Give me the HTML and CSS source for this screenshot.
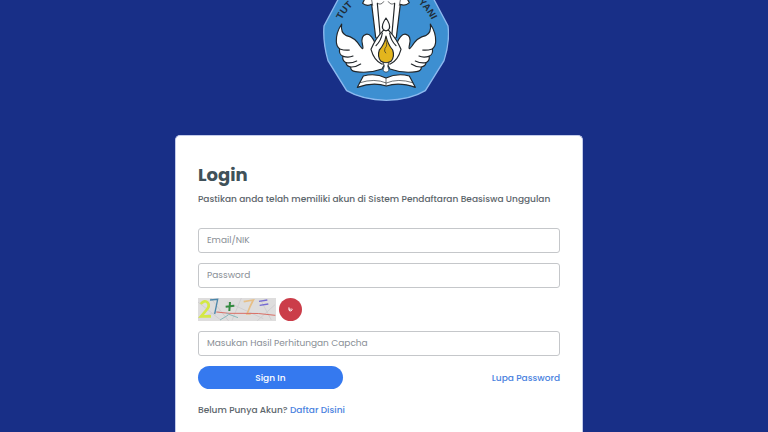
FILE: index.html
```html
<!DOCTYPE html>
<html lang="id">
<head>
  <meta charset="UTF-8">
  <meta name="viewport" content="width=device-width, initial-scale=1.0">
  <title>Login</title>
  <link rel="stylesheet" href="styles.css">
</head>
<body>
  <div class="login-page">
    <header class="brand">
      <svg class="logo" viewBox="-21 0 420 303" role="img" aria-label="Tut Wuri Handayani">
        <defs>
          <path id="motto" d="M77 60 A150 150 0 0 1 347 60"/>
        </defs>
        <path d="M76 -20 L24 78 Q20 125 36 182 L92 272 Q140 300 211 301 Q282 300 328 272 L384 182 Q402 125 396 78 L344 -20 Z" fill="#3d8fd1" stroke="#8db9ef" stroke-width="4"/>
        <g class="motto">
          <text><textPath href="#motto">TUT</textPath></text>
          <text text-anchor="end"><textPath href="#motto" startOffset="100%">YANI</textPath></text>
        </g>
        <g fill="#fff" stroke="#22272b" stroke-width="3.5" stroke-linejoin="round" stroke-linecap="round">
          <path d="M77 72 Q60 98 61 124 Q61 139 71 147 Q67 162 81 169 Q77 180 90 188 Q91 199 104 201 Q103 213 119 215 Q160 221 198 207 L211 184 L179 133 Q165 99 150 103 Q134 107 139 132 Q145 156 132 138 Q116 112 91 107 Q73 99 77 72 Z"/>
          <path d="M71 147 Q88 152 100 150 M81 169 Q98 174 111 168 M90 188 Q106 191 122 183 M104 201 Q119 202 134 192" fill="none"/>
          <path d="M343 72 Q360 98 359 124 Q359 139 349 147 Q353 162 339 169 Q343 180 330 188 Q329 199 316 201 Q317 213 301 215 Q260 221 222 207 L209 184 L241 133 Q255 99 270 103 Q286 107 281 132 Q275 156 288 138 Q304 112 329 107 Q347 99 343 72 Z"/>
          <path d="M349 147 Q332 152 320 150 M339 169 Q322 174 309 168 M330 188 Q314 191 298 183 M316 201 Q301 202 286 192" fill="none"/>
          <path d="M140 10 Q152 20 167 13 L179 112 Q210 140 241 112 L253 13 Q268 20 280 8 L264 -20 H154 Z"/>
          <path d="M184 10 L192 100 M236 10 L228 100" fill="none"/>
          <path d="M166 -5 L170 16 M254 -5 L250 16 M184 10 Q196 17 203 5 M236 10 Q224 17 217 5" fill="none" stroke-width="2"/>
          <path d="M202 91 Q178 116 165 148 Q174 181 197 192 H223 Q246 181 255 148 Q242 116 218 91 Z"/>
          <path d="M199 99 Q196 121 180 137 M221 99 Q224 121 240 137" fill="none"/>
          <path d="M210 54 Q196 74 200 86 Q210 99 220 86 Q224 74 210 54 Z"/>
          <path d="M210 108 Q206 132 190 150 Q183 170 195 184 Q210 193 225 184 Q237 170 230 150 Q215 132 210 108 Z" fill="#e3b51d"/>
          <path d="M209 121 Q216 136 207 145 Q203 154 209 159" fill="none" stroke-width="2"/>
          <path d="M202 188 H218 L215 198 L219 211 Q210 222 201 211 L205 198 Z" stroke-width="2"/>
          <path d="M142 228 Q178 218 210 234 Q244 218 280 228 L298 262 Q249 245 211 258 Q172 245 124 262 Z"/>
          <path d="M132 248 Q176 234 211 249 Q246 234 290 248 M210 234 V256" fill="none" stroke-width="2"/>
        </g>
      </svg>
    </header>

    <main class="card">
      <h1>Login</h1>
      <p class="intro">Pastikan anda telah memiliki akun di Sistem Pendaftaran Beasiswa Unggulan</p>
      <form class="login-form">
        <input class="field" type="text" name="email" placeholder="Email/NIK" aria-label="Email/NIK">
        <input class="field" type="password" name="password" placeholder="Password" aria-label="Password">
        <div class="captcha">
          <svg class="captcha-image" viewBox="0 0 234 69" role="img" aria-label="27 + 7 =">
            <rect width="234" height="69" fill="#dedddd"/>
            <path d="M0 12 L68 66 M38 0 L92 69 M88 12 L196 62 M130 0 L102 67 M178 68 L231 20 M188 6 L220 66 M0 60 L66 39" fill="none" stroke="#d0ced0" stroke-width="3"/>
            <path d="M8 18 Q20 4 29 14 Q38 24 22 40 L9 55 H39" fill="none" stroke="#d4e845" stroke-width="8"/>
            <path d="M36 6 L59 4 L50 48" fill="none" stroke="#4b86aa" stroke-width="4"/>
            <path d="M83 26 L109 23 M96 12 L94 39" fill="none" stroke="#338a40" stroke-width="6"/>
            <path d="M137 11 L166 6 Q157 22 147 48 L158 48" fill="none" stroke="#e7bf87" stroke-width="5"/>
            <path d="M183 10 L208 6 M185 22 L211 18" fill="none" stroke="#756bd2" stroke-width="4"/>
            <path d="M55 42 Q92 48 135 46 T232 52" fill="none" stroke="#d97067" stroke-width="3"/>
            <path d="M66 66 L91 51 M85 46 L120 59" fill="none" stroke="#8bb8bb" stroke-width="3"/>
          </svg>
          <button class="refresh" type="button" aria-label="Refresh captcha">
            <svg viewBox="0 0 16 16" aria-hidden="true"><path d="M3 1 V7 H9 M3 7 V9 A5 5 0 1 0 12 5" fill="none" stroke="#fff" stroke-width="3"/></svg>
          </button>
        </div>
        <input class="field" type="text" name="captcha" placeholder="Masukan Hasil Perhitungan Capcha" aria-label="Masukan Hasil Perhitungan Capcha">
        <div class="actions">
          <button class="sign-in" type="submit">Sign In</button>
          <a href="#">Lupa Password</a>
        </div>
      </form>
      <p class="register">Belum Punya Akun? <a href="#">Daftar Disini</a></p>
    </main>
  </div>
</body>
</html>
```

FILE: styles.css
```css
* {
  box-sizing: border-box;
}
body {
  margin: 0;
  background-color: #182f87;
  color: #5c656b;
  font-family: Poppins, Inter, sans-serif;
  font-size: 9px;
  font-weight: 500;
  line-height: 16px;
}
a {
  color: #4a82e0;
  text-decoration: none;
}
.login-page {
  display: flex;
  flex-direction: column;
  align-items: center;
  gap: 34px;
  min-height: 100vh;
  padding-right: 10px;
}
.logo {
  display: block;
  width: 140px;
}
.motto {
  fill: #202c38;
  font-family: "Liberation Sans", Arial, sans-serif;
  font-size: 29px;
  font-weight: 700;
}
.card {
  flex: 1;
  width: 100%;
  max-width: 408px;
  padding: 27px 22px 14px;
  background-color: #fff;
  border: 1px solid #c3cbea;
  border-bottom: 0;
  border-radius: 5px 5px 0 0;
}
h1 {
  margin: 0;
  color: #405159;
  font-size: 18px;
  line-height: 24px;
}
.intro {
  margin: 4px 0 21px;
}
.login-form {
  display: flex;
  flex-direction: column;
  gap: 10px;
}
.field {
  width: 100%;
  height: 25px;
  padding: 0 8px;
  border: 1px solid #c5c7ca;
  border-radius: 3px;
  background-color: #fff;
  color: #50595f;
  font: inherit;
  font-weight: 400;
}
.field::placeholder {
  color: #8a8f96;
  opacity: 1;
}
.captcha {
  display: flex;
  align-items: center;
  gap: 3px;
}
.captcha-image {
  width: 78px;
  height: 23px;
}
.refresh {
  display: flex;
  align-items: center;
  justify-content: center;
  width: 23px;
  height: 23px;
  padding: 0;
  border: 0;
  border-radius: 50%;
  background-color: #cb3d49;
}
.refresh svg {
  width: 5px;
}
.actions {
  display: flex;
  align-items: center;
  justify-content: space-between;
}
.sign-in {
  width: 40%;
  height: 23px;
  padding: 0;
  border: 0;
  border-radius: 12px;
  background-color: #3579ef;
  color: #fff;
  font: inherit;
}
.register {
  margin: 13px 0 0;
}
```
